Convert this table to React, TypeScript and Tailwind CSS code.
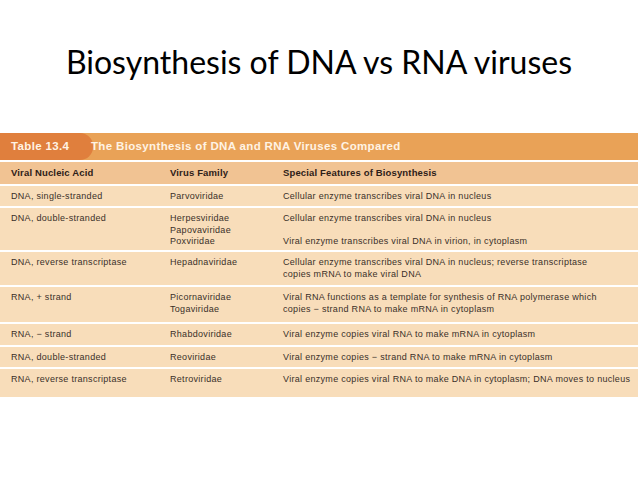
const rows = [
  { acid: ["DNA, single-stranded"], family: ["Parvoviridae"], features: ["Cellular enzyme transcribes viral DNA in nucleus"], h: "h-[20px]" },
  {
    acid: ["DNA, double-stranded"],
    family: ["Herpesviridae", "Papovaviridae", "Poxviridae"],
    features: ["Cellular enzyme transcribes viral DNA in nucleus", "", "Viral enzyme transcribes viral DNA in virion, in cytoplasm"],
    h: "h-[42px]",
  },
  {
    acid: ["DNA, reverse transcriptase"],
    family: ["Hepadnaviridae"],
    features: ["Cellular enzyme transcribes viral DNA in nucleus; reverse transcriptase", "copies mRNA to make viral DNA"],
    h: "h-[33px]",
  },
  {
    acid: ["RNA, + strand"],
    family: ["Picornaviridae", "Togaviridae"],
    features: ["Viral RNA functions as a template for synthesis of RNA polymerase which", "copies \u2212 strand RNA to make mRNA in cytoplasm"],
    h: "h-[35px]",
  },
  { acid: ["RNA, \u2212 strand"], family: ["Rhabdoviridae"], features: ["Viral enzyme copies viral RNA to make mRNA in cytoplasm"], h: "h-[21px]" },
  { acid: ["RNA, double-stranded"], family: ["Reoviridae"], features: ["Viral enzyme copies \u2212 strand RNA to make mRNA in cytoplasm"], h: "h-[20px]" },
  {
    acid: ["RNA, reverse transcriptase"],
    family: ["Retroviridae"],
    features: ["Viral enzyme copies viral RNA to make DNA in cytoplasm; DNA moves to nucleus"],
    h: "h-[28px]",
  },
];

const Lines = ({ items }: { items: string[] }) => (
  <>
    {items.map((t, i) => (
      <div key={i} className="h-[11.5px] whitespace-nowrap">
        {t || "\u00a0"}
      </div>
    ))}
  </>
);

export default function App() {
  return (
    <div className="w-[638px] h-[479px] bg-white overflow-hidden">
      <h1 className="pt-[42px] h-[133px] text-center text-[32px] leading-[40px] text-black font-['Lato',sans-serif]">
        Biosynthesis of DNA vs RNA viruses
      </h1>

      <div className="font-['Liberation_Sans',Arial,sans-serif]">
        {/* TITLE BAR */}
        <div className="flex h-[27px] bg-[#e9a257]">
          <div className="w-[93px] bg-[#e07f3d] rounded-r-[13px] pl-[11px] pt-[1px] flex items-center text-[11.5px] font-bold text-[#fff3e4] tracking-[0.35px]">
            Table 13.4
          </div>
          <div className="flex-1 flex items-center pt-[1px] -ml-[2px] text-[11.5px] font-bold text-[#fff3e4] tracking-[0.35px]">
            The Biosynthesis of DNA and RNA Viruses Compared
          </div>
        </div>

        {/* COLUMN HEADERS */}
        <div className="mt-[2px] flex h-[22px] items-center bg-[#f1c393] text-[9.5px] font-bold text-[#2e2018] tracking-[0.15px]">
          <div className="w-[170px] pl-[11px]">Viral Nucleic Acid</div>
          <div className="w-[113px]">Virus Family</div>
          <div className="flex-1">Special Features of Biosynthesis</div>
        </div>

        {/* ROWS */}
        {rows.map((r, i) => (
          <div
            key={i}
            className={`mt-[2px] flex pt-[5px] bg-[#f8ddba] text-[9px] leading-[11.5px] text-[#3a3029] tracking-[0.3px] ${r.h}`}
          >
            <div className="w-[170px] pl-[11px]">
              <Lines items={r.acid} />
            </div>
            <div className="w-[113px]">
              <Lines items={r.family} />
            </div>
            <div className="flex-1">
              <Lines items={r.features} />
            </div>
          </div>
        ))}
      </div>
    </div>
  );
}
